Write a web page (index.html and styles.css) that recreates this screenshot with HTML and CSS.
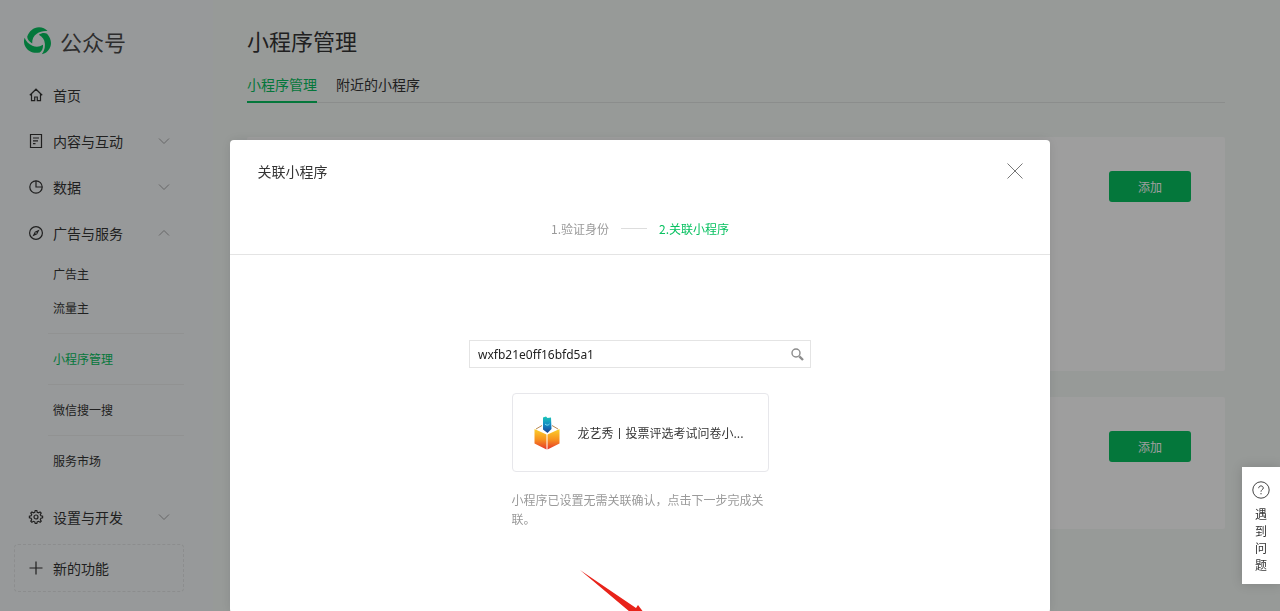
FILE: index.html
```html
<!DOCTYPE html>
<html lang="zh-CN">
<head>
    <meta charset="UTF-8">
    <meta name="viewport" content="width=device-width, initial-scale=1.0">
    <title>公众号</title>
    <link rel="stylesheet" href="styles.css">
</head>
<body>
    <div class="page">
        <aside class="sidebar">
            <a class="logo" href="#">
                <svg class="logo-icon" viewBox="0 0 28 28" aria-hidden="true">
                    <path id="leaf" d="M3.200 9.800C5 4 9.500.200 15 .200c3.500 0 6.500 1.400 8.600 3.900-3.600-.5-7.600.3-10.800 2.700C9.600 9 8 12.200 8.200 16.400 5.200 15 3.400 12.600 3.200 9.800z"/>
                    <use href="#leaf" transform="rotate(120 14 14)"/>
                    <use href="#leaf" transform="rotate(240 14 14)"/>
                </svg>
                <span>公众号</span>
            </a>
            <nav>
                <ul class="menu">
                    <li>
                        <a class="menu-item" href="#">
                            <svg class="icon" viewBox="0 0 14 14"><path d="M.800 7.300 7 1.200l6.200 6.100M2.500 6v6.700h3.200V9h2.600v3.700h3.200V6"/></svg>
                            <span>首页</span>
                        </a>
                    </li>
                    <li>
                        <a class="menu-item" href="#">
                            <svg class="icon" viewBox="0 0 14 14"><path d="M1.500.500h11v13h-11zM4 4h6M4 6.800h5M4 9.600h2.500"/></svg>
                            <span>内容与互动</span>
                            <svg class="chevron" viewBox="0 0 12 8"><path d="M1 1.500l5 5 5-5"/></svg>
                        </a>
                    </li>
                    <li>
                        <a class="menu-item" href="#">
                            <svg class="icon" viewBox="0 0 14 14"><circle cx="7" cy="7" r="6.200"/><path d="M7 .800V7h6.200"/></svg>
                            <span>数据</span>
                            <svg class="chevron" viewBox="0 0 12 8"><path d="M1 1.500l5 5 5-5"/></svg>
                        </a>
                    </li>
                    <li>
                        <a class="menu-item" href="#">
                            <svg class="icon" viewBox="0 0 14 14"><circle cx="7" cy="7" r="6.400"/><path class="fill" d="M10.600 3.400 8.200 8.200 3.400 10.600 5.800 5.800z"/><circle class="hole" cx="7" cy="7" r=".8"/></svg>
                            <span>广告与服务</span>
                            <svg class="chevron" viewBox="0 0 12 8"><path d="M1 6.500l5-5 5 5"/></svg>
                        </a>
                        <ul class="submenu">
                            <li class="group">
                                <a href="#">广告主</a>
                                <a href="#">流量主</a>
                            </li>
                            <li><a class="active" href="#">小程序管理</a></li>
                            <li><a href="#">微信搜一搜</a></li>
                            <li><a href="#">服务市场</a></li>
                        </ul>
                    </li>
                    <li>
                        <a class="menu-item" href="#">
                            <svg class="icon" viewBox="0 0 14 14"><path d="M5.800 2.200 6.200.500h1.600l.4 1.700 1.400.6 1.500-.9 1.100 1.100-.9 1.500.6 1.300 1.700.4v1.600l-1.700.4-.6 1.400.9 1.500-1.100 1.100-1.500-.9-1.400.6-.4 1.600H6.200l-.4-1.600-1.400-.6-1.500.9-1.100-1.100.9-1.500-.6-1.400L.400 7.800V6.200l1.700-.4.6-1.300-.9-1.500 1.100-1.100 1.500.9z"/><circle cx="7" cy="7" r="2"/></svg>
                            <span>设置与开发</span>
                            <svg class="chevron" viewBox="0 0 12 8"><path d="M1 1.500l5 5 5-5"/></svg>
                        </a>
                    </li>
                </ul>
            </nav>
            <a class="menu-item new-feature" href="#">
                <svg class="icon" viewBox="0 0 14 14"><path d="M7 .500v13M.500 7h13"/></svg>
                <span>新的功能</span>
            </a>
        </aside>

        <main class="main">
            <h1>小程序管理</h1>
            <nav class="tabs">
                <a class="active" href="#">小程序管理</a>
                <a href="#">附近的小程序</a>
            </nav>
            <section class="panel panel-large">
                <button type="button" class="btn-add">添加</button>
            </section>
            <section class="panel">
                <button type="button" class="btn-add">添加</button>
            </section>
        </main>
    </div>

    <div class="mask">
        <div class="dialog" role="dialog" aria-labelledby="dialog-title">
            <header class="dialog-header">
                <h2 id="dialog-title">关联小程序</h2>
                <button type="button" class="btn-close" aria-label="关闭">
                    <svg viewBox="0 0 16 16"><path d="M.500.500l15 15M15.500.500l-15 15"/></svg>
                </button>
            </header>
            <ol class="steps">
                <li>1.验证身份</li>
                <li class="current">2.关联小程序</li>
            </ol>
            <div class="dialog-body">
                <form class="search">
                    <input type="text" value="wxfb21e0ff16bfd5a1" aria-label="AppID">
                    <button type="button" aria-label="搜索">
                        <svg viewBox="0 0 13 13"><circle cx="5" cy="5" r="4"/><path class="handle" d="M8.300 8.300l3.700 3.700"/></svg>
                    </button>
                </form>
                <div class="result">
                    <div class="app-card">
                        <svg class="app-icon" viewBox="0 0 26 34" aria-hidden="true">
                            <defs>
                                <linearGradient id="box" x1="0" y1="0" x2="0" y2="1">
                                    <stop offset="0" stop-color="#fbd02c"/>
                                    <stop offset=".5" stop-color="#f8941f"/>
                                    <stop offset="1" stop-color="#e5352b"/>
                                </linearGradient>
                                <linearGradient id="ticket" x1="0" y1="0" x2="0" y2="1">
                                    <stop offset="0" stop-color="#1cc9b7"/>
                                    <stop offset=".5" stop-color="#1389c4"/>
                                    <stop offset="1" stop-color="#1b3f91"/>
                                </linearGradient>
                            </defs>
                            <path d="M2 13l6-3.500M24 13l-6-3.500" stroke="#b98a55" fill="none"/>
                            <path fill="url(#ticket)" d="M9 1.500 12 .500l1.500 1.500 3.500-.5.500 11.500-4 4-4.500-3.500z"/>
                            <path d="M11 8c1.500 1.500 3 1.500 4.500 0" fill="none" stroke="#7fe0ef"/>
                            <path fill="url(#box)" d="M.500 13 12.500 18.500v15l-12-6zM25.500 13 13.500 18.500v15l12-6z"/>
                        </svg>
                        <span>龙艺秀丨投票评选考试问卷小...</span>
                    </div>
                    <p class="hint">小程序已设置无需关联确认，点击下一步完成关联。</p>
                </div>
            </div>
            <svg class="arrow" viewBox="0 0 110 80" aria-hidden="true">
                <path d="M0 0 56 38l2-3 30 40-42-22 4-11z"/>
            </svg>
        </div>
    </div>

    <a class="help" href="#">
        <svg viewBox="0 0 18 18"><circle cx="9" cy="9" r="8.200"/><path d="M6.700 7.200c0-1.400 1-2.300 2.300-2.300s2.300.9 2.300 2.100c0 1.600-2.300 1.700-2.300 3.700M9 12v1.300"/></svg>
        <span>遇到问题</span>
    </a>
</body>
</html>
```
FILE: styles.css
```css
* {
    box-sizing: border-box;
}
body {
    margin: 0;
    height: 100vh;
    overflow: hidden;
    font-family: "Noto Sans CJK SC", "Noto Sans", sans-serif;
    font-size: 14px;
    color: #353535;
    background-color: #f4f8f6;
}
h1, h2, p, ul, ol {
    margin: 0;
    padding: 0;
    font-weight: normal;
}
ul, ol {
    list-style: none;
}
a {
    color: inherit;
    text-decoration: none;
}
button {
    font-family: inherit;
    cursor: pointer;
}
svg {
    display: block;
    flex-shrink: 0;
}
.page {
    display: flex;
    min-height: 100vh;
}

/* sidebar */
.sidebar {
    width: 213px;
    flex-shrink: 0;
    padding: 18px 29px 18px 14px;
    background-color: #f4f7f8;
}
.logo {
    display: flex;
    align-items: center;
    gap: 8px;
    height: 46px;
    margin-bottom: 8px;
    padding-left: 10px;
    font-size: 22px;
    line-height: 30px;
    color: #4a4a4a;
}
.logo-icon {
    width: 28px;
    height: 28px;
    fill: #07c160;
}
.menu-item {
    display: flex;
    align-items: center;
    gap: 10px;
    height: 46px;
    padding: 0 14px 0 15px;
    line-height: 20px;
}
.icon {
    width: 14px;
    height: 14px;
    overflow: visible;
    fill: none;
    stroke: #333;
    stroke-width: 1.2;
}
.icon .fill {
    fill: #333;
    stroke: none;
}
.icon .hole {
    fill: #f4f7f8;
    stroke: none;
}
.chevron {
    width: 12px;
    height: 8px;
    margin-left: auto;
    fill: none;
    stroke: #a4a6a7;
}
.submenu {
    margin-bottom: 8px;
    padding: 1px 0 0 34px;
    font-size: 12px;
}
.submenu li + li {
    border-top: 1px solid #eaecec;
}
.submenu a {
    display: block;
    padding-left: 5px;
    line-height: 50px;
}
.submenu .group {
    padding-bottom: 8px;
}
.submenu .group a {
    line-height: 34px;
}
.submenu .active {
    color: #07c160;
}
.new-feature {
    height: 48px;
    margin-top: 4px;
    padding-left: 14px;
    border: 1px dashed #e2e4e5;
    border-radius: 4px;
}

/* main */
.main {
    flex: 1;
    padding: 24px 55px 24px 34px;
}
.main h1 {
    font-size: 22px;
    line-height: 32px;
}
.tabs {
    display: flex;
    gap: 19px;
    margin: 12px 0 34px;
    line-height: 33px;
    border-bottom: 1px solid #e1e4e3;
}
.tabs a {
    margin-bottom: -1px;
}
.tabs .active {
    color: #07c160;
    border-bottom: 2px solid #07c160;
}
.panel {
    display: flex;
    justify-content: flex-end;
    align-items: flex-start;
    min-height: 132px;
    margin-bottom: 26px;
    padding: 34px;
    background-color: #fff;
    border-radius: 2px;
}
.panel-large {
    min-height: 234px;
}
.btn-add {
    width: 82px;
    height: 31px;
    padding: 0;
    border: none;
    border-radius: 3px;
    background-color: #07c160;
    color: #fff;
    font-size: 12px;
}

/* dialog */
.mask {
    position: fixed;
    inset: 0;
    padding-top: 140px;
    background-color: rgba(0, 0, 0, 0.38);
}
.dialog {
    position: relative;
    width: 64%;
    min-height: 100%;
    margin: 0 auto;
    background-color: #fff;
    border-radius: 4px;
    box-shadow: 0 0 12px rgba(0, 0, 0, 0.1);
}
.dialog-header {
    display: flex;
    justify-content: space-between;
    align-items: center;
    height: 62px;
    padding: 0 27px;
}
.dialog-header h2 {
    font-size: 14px;
    line-height: 20px;
}
.btn-close {
    padding: 0;
    border: none;
    background: none;
}
.btn-close svg {
    width: 16px;
    height: 16px;
    stroke: #777;
}
.steps {
    display: flex;
    justify-content: center;
    align-items: center;
    gap: 12px;
    height: 53px;
    font-size: 12px;
    color: #9a9a9a;
    border-bottom: 1px solid #e4e4e4;
}
.steps li {
    display: flex;
    align-items: center;
    gap: 12px;
}
.steps .current {
    color: #07c160;
}
.steps .current::before {
    content: "";
    width: 26px;
    border-top: 1px solid #ddd;
}
.dialog-body {
    display: flex;
    flex-direction: column;
    align-items: center;
    gap: 25px;
    padding: 85px 20px;
}
.search {
    display: flex;
    align-items: center;
    width: 342px;
    height: 28px;
    border: 1px solid #e4e4e4;
}
.search input {
    flex: 1;
    min-width: 0;
    padding: 0 8px;
    border: none;
    outline: none;
    font-family: "Noto Sans", "Noto Sans CJK SC", sans-serif;
    font-size: 12px;
    color: #222;
}
.search button {
    padding: 0 6px;
    border: none;
    background: none;
}
.search svg {
    width: 13px;
    height: 13px;
    fill: none;
    stroke: #8c8c8c;
    stroke-width: 1.4;
}
.search .handle {
    stroke-width: 2.4;
}
.result {
    width: 257px;
    font-size: 12px;
}
.app-card {
    display: flex;
    align-items: center;
    gap: 18px;
    height: 79px;
    padding: 0 21px;
    white-space: nowrap;
    border: 1px solid #e7e7eb;
    border-radius: 4px;
}
.app-icon {
    width: 26px;
    height: 34px;
}
.hint {
    margin-top: 18px;
    line-height: 19px;
    color: #9a9a9a;
}
.arrow {
    position: absolute;
    top: 430px;
    left: 350px;
    width: 110px;
    height: 80px;
    fill: #e8231a;
}

/* help entry */
.help {
    position: fixed;
    right: 0;
    bottom: 27px;
    display: flex;
    flex-direction: column;
    align-items: center;
    gap: 6px;
    width: 38px;
    padding: 14px 0 11px;
    background-color: #fff;
    box-shadow: 0 0 12px rgba(0, 0, 0, 0.15);
    font-size: 12px;
    line-height: 17px;
}
.help svg {
    width: 18px;
    height: 18px;
    fill: none;
    stroke: #444;
}
.help span {
    width: 12px;
}
```
